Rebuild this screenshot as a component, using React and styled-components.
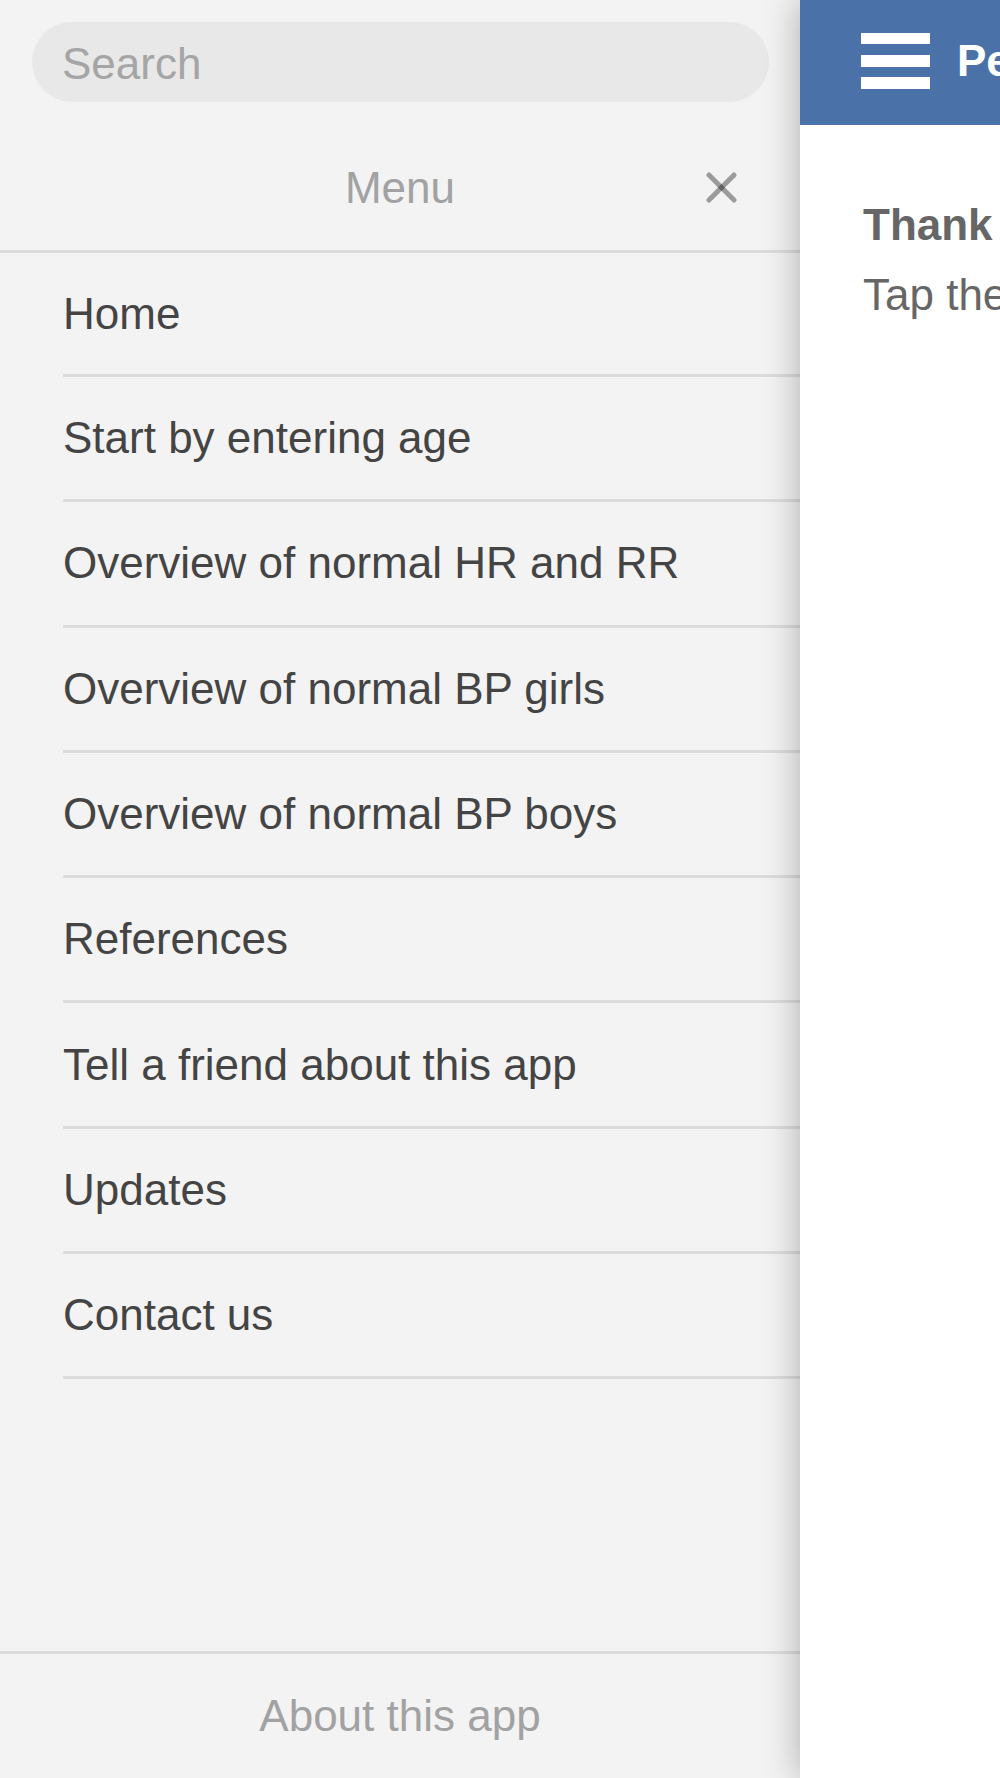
import styled, { createGlobalStyle } from "styled-components";

const GlobalStyle = createGlobalStyle`
    html, body {
        margin: 0;
        padding: 0;
        overflow: hidden;
        background: #ffffff;
    }

    * {
        box-sizing: border-box;
    }
`

const Viewport = styled.div`
    width: 1000px;
    height: 1778px;
    overflow: hidden;
    font-family: "Liberation Sans", Arial, sans-serif;
`

const Track = styled.div`
    display: flex;
    width: 1800px;
    height: 100%;
`

const Sidebar = styled.nav`
    display: flex;
    flex-direction: column;
    flex: 0 0 800px;
    height: 100%;
    background: #f3f3f3;
`

const SearchBar = styled.div`
    padding: 22px 31px 23px 32px;
`

const SearchInput = styled.input`
    display: block;
    width: 100%;
    height: 80px;
    border: none;
    border-radius: 40px;
    background: #e8e8e8;
    padding: 4px 30px 0;
    font-family: inherit;
    font-size: 44px;
    color: #444;
    outline: none;

    &::placeholder {
        color: #a5a5a5;
    }
`

const MenuHeader = styled.div`
    display: grid;
    grid-template-columns: 1fr auto 1fr;
    align-items: center;
    height: 128px;
    padding: 0 63px;
    border-bottom: 3px solid #dcdcdc;
`

const MenuTitle = styled.span`
    grid-column: 2;
    font-size: 44px;
    color: #a2a2a2;
`

const CloseButton = styled.button`
    justify-self: end;
    display: flex;
    padding: 0;
    border: none;
    background: none;
`

const MenuList = styled.ul`
    flex: 1;
    margin: 0;
    padding: 0;
    list-style: none;
`

const MenuItem = styled.li`
    display: flex;
    align-items: center;
    height: ${({ $first }) => ($first ? "124px" : "125.3px")};
    margin-left: 63px;
    border-bottom: 3px solid #dcdcdc;
    font-size: 44px;
    color: #444444;
`

const Footer = styled.div`
    display: flex;
    align-items: center;
    justify-content: center;
    height: 127px;
    border-top: 3px solid #dcdcdc;
    font-size: 44px;
    color: #a2a2a2;
`

const Main = styled.main`
    flex: 0 0 1000px;
    height: 100%;
    background: #ffffff;
    box-shadow: 0 0 34px rgba(0, 0, 0, 0.3);
`

const TitleBar = styled.header`
    display: flex;
    align-items: center;
    gap: 27px;
    height: 125px;
    padding: 0 0 4px 61px;
    background: #4a71a8;
    color: #ffffff;
`

const AppTitle = styled.h1`
    margin: 0;
    font-size: 44px;
    font-weight: bold;
    white-space: nowrap;
`

const Content = styled.section`
    padding: 69px 0 0 63px;
    color: #666666;
    font-size: 44px;
    line-height: 1.4;
    white-space: nowrap;

    h2 {
        margin: 0 0 8px;
        font-size: 44px;
        font-weight: bold;
    }

    p {
        margin: 0;
    }
`

const menuItems = [
    "Home",
    "Start by entering age",
    "Overview of normal HR and RR",
    "Overview of normal BP girls",
    "Overview of normal BP boys",
    "References",
    "Tell a friend about this app",
    "Updates",
    "Contact us",
]

const CloseIcon = () => (
    <svg width="31" height="31" viewBox="0 0 31 31">
        <g stroke="rgba(0, 0, 0, 0.36)" strokeWidth="5" strokeLinecap="round">
            <line x1="3" y1="3" x2="28" y2="28" />
            <line x1="28" y1="3" x2="3" y2="28" />
        </g>
    </svg>
)

const MenuIcon = () => (
    <svg width="69" height="56" viewBox="0 0 69 56" fill="#ffffff">
        <rect x="0" y="0" width="69" height="11" />
        <rect x="0" y="22" width="69" height="12" />
        <rect x="0" y="44" width="69" height="12" />
    </svg>
)

const App = () => {
    return (
        <Viewport>
            <GlobalStyle />
            <Track>
                <Sidebar>
                    <SearchBar>
                        <SearchInput type="text" placeholder="Search" />
                    </SearchBar>
                    <MenuHeader>
                        <MenuTitle>Menu</MenuTitle>
                        <CloseButton aria-label="Close menu">
                            <CloseIcon />
                        </CloseButton>
                    </MenuHeader>
                    <MenuList>
                        {menuItems.map((item, i) => (
                            <MenuItem key={item} $first={i === 0}>{item}</MenuItem>
                        ))}
                    </MenuList>
                    <Footer>About this app</Footer>
                </Sidebar>
                <Main>
                    <TitleBar>
                        <MenuIcon />
                        <AppTitle>Pediatric Vital Signs</AppTitle>
                    </TitleBar>
                    <Content>
                        <h2>Thank you for using this app</h2>
                        <p>Tap the menu icon to get started.</p>
                    </Content>
                </Main>
            </Track>
        </Viewport>
    )
}

export default App;
